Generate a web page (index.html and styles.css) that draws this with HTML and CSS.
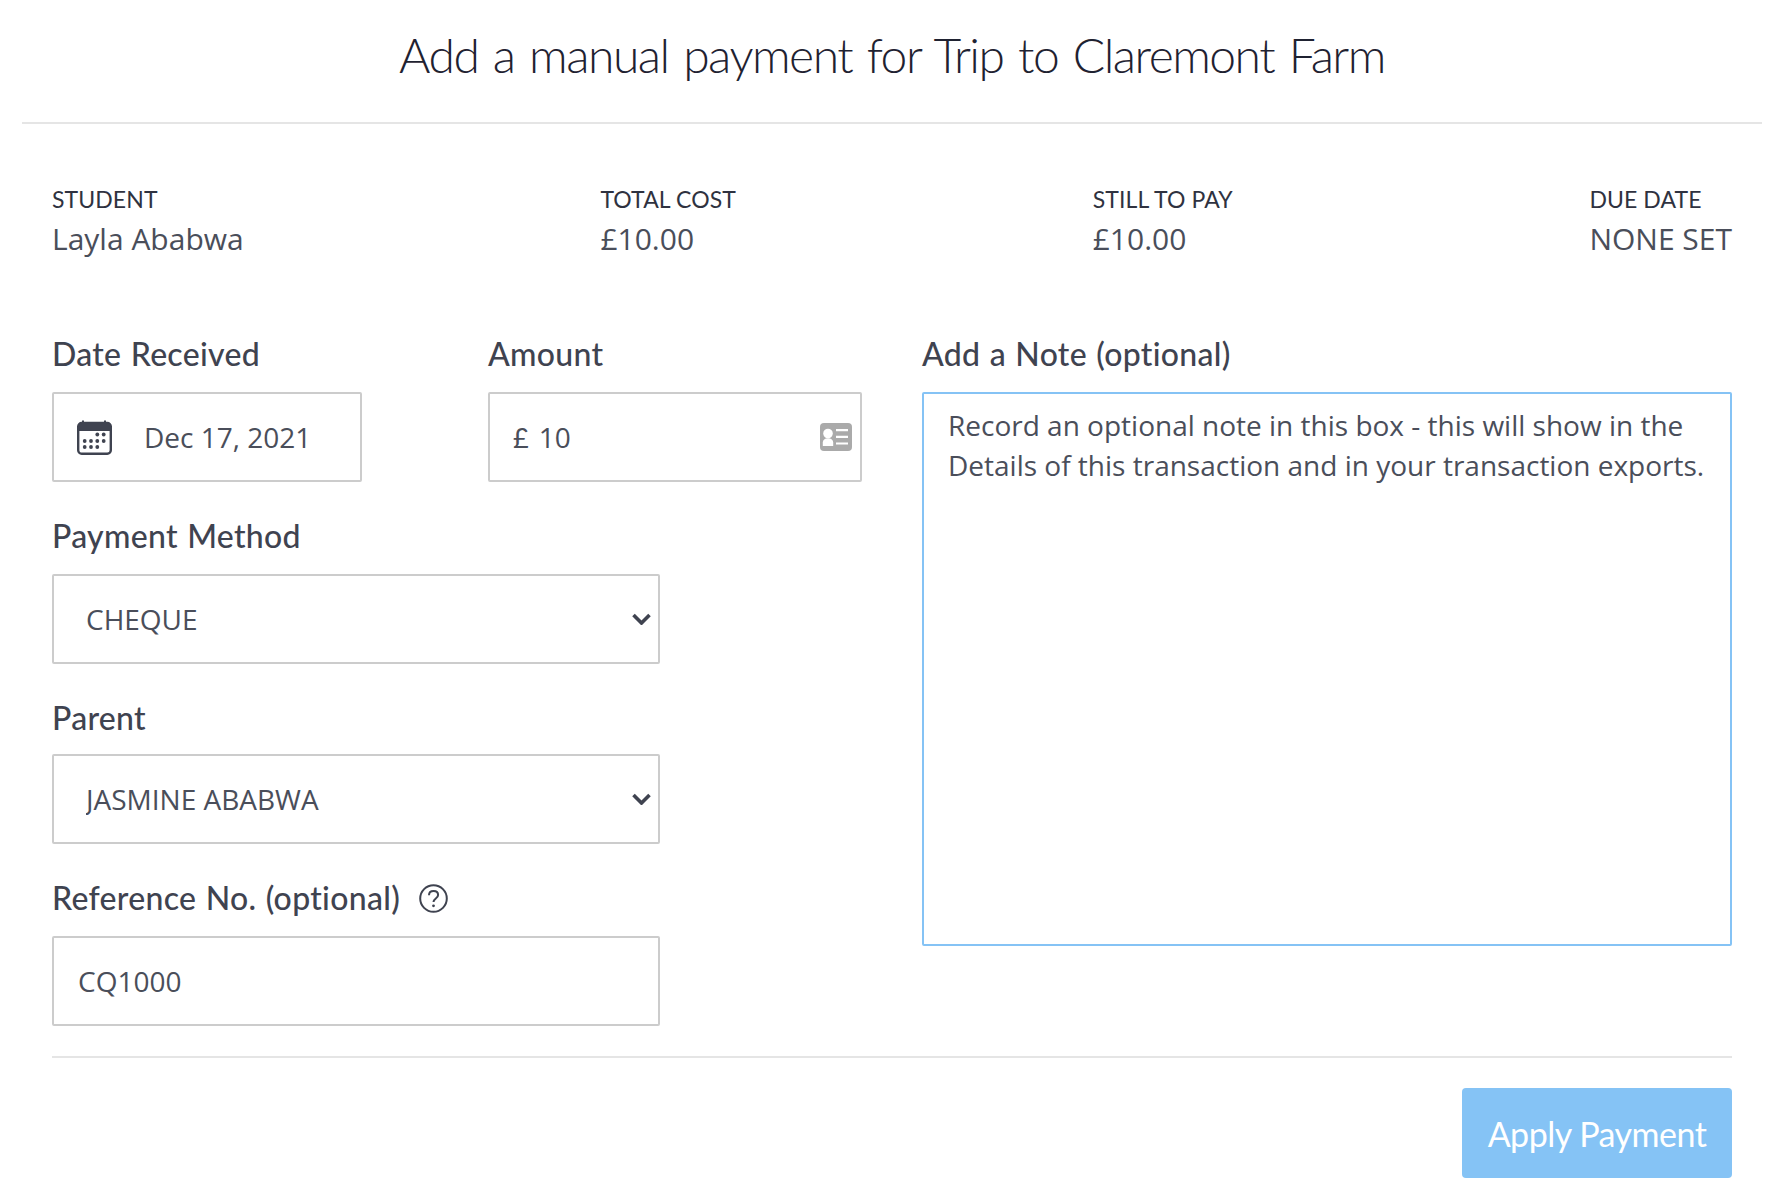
FILE: index.html
```html
<!DOCTYPE html>
<html lang="en">
<head>
<meta charset="utf-8">
<title>Add a manual payment</title>
<link rel="stylesheet" href="styles.css">
</head>
<body>
<h1 class="title">Add a manual payment for Trip to Claremont Farm</h1>
<main class="content">
  <section class="summary">
    <div><div class="summary-label">STUDENT</div><div class="summary-value">Layla Ababwa</div></div>
    <div><div class="summary-label">TOTAL COST</div><div class="summary-value">£10.00</div></div>
    <div><div class="summary-label">STILL TO PAY</div><div class="summary-value">£10.00</div></div>
    <div><div class="summary-label">DUE DATE</div><div class="summary-value">NONE SET</div></div>
  </section>
  <form class="form">
    <div class="left">
      <div class="row">
        <div class="field date-field">
          <label class="label">Date Received</label>
          <div class="box date-box">
            <svg class="cal" width="35" height="35" viewBox="0 0 35 35">
              <path d="M6 2.5V0.5M28 2.5V0.5" stroke="#3f4350" stroke-width="2" fill="none"/>
              <rect x="1.2" y="3" width="32.6" height="30.8" rx="3.5" fill="#fff" stroke="#3f4350" stroke-width="2.4"/>
              <path d="M1.2 6.5a3.5 3.5 0 0 1 3.5-3.5h25.6a3.5 3.5 0 0 1 3.5 3.5V11H1.2z" fill="#3f4350"/>
              <g fill="#3f4350"><circle cx="20.3" cy="14.5" r="1.9"/><circle cx="26.7" cy="14.5" r="1.9"/><circle cx="7.7" cy="21" r="1.9"/><circle cx="14" cy="21" r="1.9"/><circle cx="20.3" cy="21" r="1.9"/><circle cx="26.7" cy="21" r="1.9"/><circle cx="7.7" cy="27" r="1.9"/><circle cx="14" cy="27" r="1.9"/><circle cx="20.3" cy="27" r="1.9"/></g>
            </svg>
            <input class="control" type="text" value="Dec 17, 2021">
          </div>
        </div>
        <div class="field amount-field">
          <label class="label">Amount</label>
          <div class="box amount-box">
            <span class="currency">£</span>
            <input class="control" type="text" value="10">
            <svg class="card" width="32" height="28" viewBox="0 0 32 28">
              <rect width="32" height="28" rx="4" fill="#aaa"/>
              <circle cx="8" cy="10.5" r="4.8" fill="#fff"/>
              <path d="M2.8 23v-3.5c0-2.6 2-4.2 5.2-4.2s5.2 1.600 5.200 4.200V23z" fill="#fff"/>
              <path d="M16 6h12v2.200H16zM16 12.700h12v2.200H16zM16 19.400h12v2.200H16z" fill="#fff"/>
            </svg>
          </div>
        </div>
      </div>
      <div class="field">
        <label class="label">Payment Method</label>
        <div class="box select-box">
          <select class="control select"><option>CHEQUE</option></select>
          <svg class="chev" width="19" height="12" viewBox="0 0 19 12"><path d="M1.500 2l8 8 8-8" fill="none" stroke="#3f4350" stroke-width="3.600"/></svg>
        </div>
      </div>
      <div class="field parent-field">
        <label class="label">Parent</label>
        <div class="box select-box">
          <select class="control select"><option>JASMINE ABABWA</option></select>
          <svg class="chev" width="19" height="12" viewBox="0 0 19 12"><path d="M1.500 2l8 8 8-8" fill="none" stroke="#3f4350" stroke-width="3.600"/></svg>
        </div>
      </div>
      <div class="field">
        <label class="label">Reference No. (optional)
          <svg class="help" width="29" height="29" viewBox="0 0 29 29"><circle cx="14.500" cy="14.500" r="13.300" fill="none" stroke="#3f4350" stroke-width="2"/><path d="M10 11.300c0-2.700 2-4.300 4.600-4.300 2.700 0 4.500 1.700 4.500 3.900 0 3.600-4.600 3.500-4.600 7.100" fill="none" stroke="#3f4350" stroke-width="2"/><circle cx="14.500" cy="21.800" r="1.400" fill="#3f4350"/></svg>
        </label>
        <div class="box ref-box"><input class="control" type="text" value="CQ1000"></div>
      </div>
    </div>
    <div class="right">
      <label class="label">Add a Note (optional)</label>
      <textarea class="note">Record an optional note in this box - this will show in the Details of this transaction and in your transaction exports.</textarea>
    </div>
  </form>
  <footer class="footer">
    <button class="apply" type="button">Apply Payment</button>
  </footer>
</main>
</body>
</html>
```
FILE: styles.css
```css
* { box-sizing: border-box; }
html, body { margin: 0; padding: 0; background: #fff; }
body { width: 1784px; height: 1198px; overflow: hidden; font-family: "Open Sans", sans-serif; color: #4a4e5a; }

.title {
  margin: 0 22px;
  height: 124px;
  padding-top: 24px;
  border-bottom: 2px solid #e5e5e5;
  text-align: center;
  font-family: Lato, sans-serif;
  font-weight: 300;
  font-size: 48px;
  letter-spacing: -1.5px;
  word-spacing: 3px;
  line-height: 62px;
  color: #1f2231;
}

.content { padding: 0 52px; }

.summary {
  display: flex;
  justify-content: space-between;
  padding-top: 61px;
}
.summary-label {
  font-family: Lato, sans-serif;
  font-size: 23px;
  letter-spacing: 0.1px;
  line-height: 28px;
  color: #2f3240;
}
.summary-value {
  margin-top: 6px;
  font-size: 30px;
  line-height: 40px;
  color: #4a4e5a;
}

.form {
  display: flex;
  justify-content: space-between;
  margin-top: 75px;
}
.left { width: 810px; }
.right { width: 810px; display: flex; flex-direction: column; }

.row { display: flex; justify-content: space-between; }

.label {
  display: block;
  height: 58px;
  font-family: Lato, sans-serif;
  font-weight: 500;
  font-size: 32px;
  letter-spacing: 0.3px;
  word-spacing: 1px;
  line-height: 40px;
  color: #3f4350;
}
.field { width: 608px; margin-top: 34px; }
.row .field { margin-top: 0; }
.row .date-field { width: 310px; }
.row .amount-field { width: 374px; }
.parent-field { margin-top: 34px; }
.parent-field .label { height: 56px; }

.box {
  display: flex;
  align-items: center;
  height: 90px;
  border: 2px solid #ccc;
  border-radius: 2px;
  background: #fff;
}
.control {
  flex: 1;
  min-width: 0;
  border: 0;
  outline: 0;
  background: transparent;
  padding: 0;
  font-family: "Open Sans", sans-serif;
  font-size: 28px;
  color: #4a4e5a;
}
.date-box { padding-left: 23px; }
.date-box .control { margin-left: 32px; }
.amount-box { padding: 0 8px 0 23px; }
.amount-box .currency { font-family: Lato, sans-serif; font-size: 27px; color: #4a4e5a; margin-right: 10px; }
.select-box { padding: 0 7px 0 32px; }
.select { appearance: none; -webkit-appearance: none; height: 60px; }
.ref-box { padding-left: 24px; }

.help { vertical-align: -3px; margin-left: 10px; }

.note {
  width: 100%;
  height: 554px;
  padding: 11px 24px;
  border: 2px solid #85c3f5;
  border-radius: 2px;
  outline: 0;
  resize: none;
  font-family: "Open Sans", sans-serif;
  font-size: 28px;
  line-height: 40px;
  color: #4a4e5a;
}

.footer {
  margin-top: 30px;
  padding-top: 30px;
  border-top: 2px solid #e5e5e5;
  display: flex;
  justify-content: flex-end;
}
.apply {
  width: 270px;
  height: 90px;
  border: 0;
  border-radius: 4px;
  background: #85c3f5;
  color: #fff;
  font-family: Lato, sans-serif;
  font-size: 34px;
  letter-spacing: -0.5px;
}
```
